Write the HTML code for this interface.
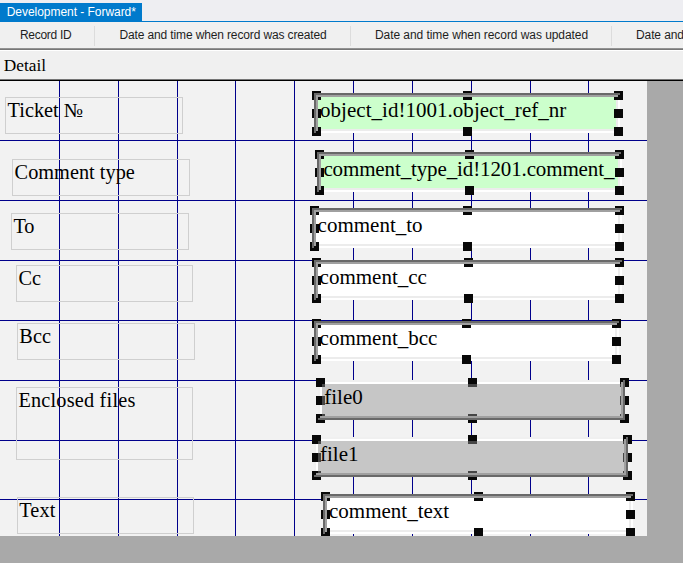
<!DOCTYPE html>
<html><head><meta charset="utf-8"><title>Development - Forward*</title>
<style>
html,body{margin:0;padding:0;}
body{width:683px;height:563px;overflow:hidden;position:relative;background:#a9a9a9;font-family:"Liberation Sans",sans-serif;}
.abs,.abs *{position:absolute;}
#top{left:0;top:0;width:683px;height:22px;background:#eeeef2;}
#tab{left:0;top:3px;width:142px;height:18px;background:#007acc;color:#fff;font-size:12px;line-height:18px;letter-spacing:-0.04px;white-space:nowrap;}
#tab span{left:6.7px;top:0px;}
#tabline{left:0;top:20.9px;width:683px;height:1.15px;background:#007acc;}
#hdr{left:0;top:22px;width:683px;height:26.5px;background:#f0f0f0;font-size:12px;color:#1e1e1e;white-space:nowrap;}
#hdr span{top:0;line-height:26px;letter-spacing:-0.1px;}
#hdr i{top:4px;width:1px;height:20px;background:#dcdcdc;}
#hdrb1{left:0;top:48px;width:683px;height:2px;background:linear-gradient(#a0a0a0,#696969);}
#hdrb2{left:0;top:50px;width:683px;height:1px;background:#fff;}
#detail{left:0;top:51px;width:683px;height:29px;background:#f0f0f0;font-family:"Liberation Serif",serif;font-size:17.3px;color:#000;}
#detail span{left:3.8px;top:5.3px;line-height:20px;}
#blk{left:0;top:78.6px;width:683px;height:2.4px;background:linear-gradient(#c8c8c8 0,#000 1.2px,#000 100%);}
#canvas{left:0;top:81px;width:647.4px;height:454.7px;background:#f2f2f2;overflow:hidden;font-family:"Liberation Serif",serif;font-size:21px;color:#000;white-space:nowrap;}
.v{top:0;width:1.2px;height:460px;background:#00008b;}
.h{left:0;height:1.2px;width:650px;background:#00008b;}
.lbl{border:1px solid #cfcfcf;box-sizing:border-box;}
.lbl span{left:1.8px;top:0.3px;line-height:24px;font-size:20.3px;}
.fill{}
.hd{background:#080808;width:9px;height:9px;}
.bd{}
.txt{overflow:hidden;}
.txt span{line-height:24px;}
</style></head><body>
<div class="abs">
<div id="top"></div>
<div id="tab"><span>Development - Forward*</span></div>
<div id="tabline"></div>
<div id="hdr">
<span style="left:20px;letter-spacing:-0.3px">Record ID</span><i style="left:94px"></i>
<span style="left:119.5px;letter-spacing:-0.135px">Date and time when record was created</span><i style="left:350px"></i>
<span style="left:375px;letter-spacing:-0.065px">Date and time when record was updated</span><i style="left:611px"></i>
<span style="left:636px">Date and time when record was closed</span>
</div>
<div id="hdrb1"></div><div id="hdrb2"></div>
<div id="detail"><span>Detail</span></div>
<div id="canvas">

<div class="v" style="left:58.7px"></div>
<div class="v" style="left:117.7px"></div>
<div class="v" style="left:176.6px"></div>
<div class="v" style="left:235.0px"></div>
<div class="v" style="left:294.0px"></div>
<div class="v" style="left:352.9px"></div>
<div class="v" style="left:411.8px"></div>
<div class="v" style="left:470.8px"></div>
<div class="v" style="left:529.9px"></div>
<div class="v" style="left:588.0px"></div>
<div class="h" style="top:58.8px"></div>
<div class="h" style="top:118.8px"></div>
<div class="h" style="top:178.5px"></div>
<div class="h" style="top:238.6px"></div>
<div class="h" style="top:298.6px"></div>
<div class="h" style="top:358.7px"></div>
<div class="h" style="top:417.7px"></div>
<div class="lbl" style="left:4.8px;top:16.0px;width:178.7px;height:36.7px"><span style="letter-spacing:0.00px">Ticket №</span></div>
<div class="lbl" style="left:11.8px;top:77.8px;width:178.4px;height:36.9px"><span style="letter-spacing:0.02px">Comment type</span></div>
<div class="lbl" style="left:10.6px;top:131.7px;width:178.2px;height:37.0px"><span style="letter-spacing:0.00px">To</span></div>
<div class="lbl" style="left:15.6px;top:183.8px;width:177.6px;height:37.3px"><span style="letter-spacing:0.15px">Cc</span></div>
<div class="lbl" style="left:16.5px;top:241.5px;width:178.7px;height:37.6px"><span style="letter-spacing:0.10px">Bcc</span></div>
<div class="lbl" style="left:15.6px;top:305.8px;width:177.6px;height:73.3px"><span style="letter-spacing:0.20px">Enclosed files</span></div>
<div class="lbl" style="left:16.5px;top:415.6px;width:177.8px;height:37.6px"><span style="letter-spacing:0.10px">Text</span></div>
<div style="left:314.0px;top:12.0px;width:306.3px;height:40.0px;background:#ccffcc"></div>
<div style="left:314.0px;top:50.0px;width:306.3px;height:2.0px;background:#ffffff"></div>
<div style="left:618.3px;top:12.0px;width:2.0px;height:40.0px;background:#ffffff"></div>
<div style="left:316.0px;top:48.0px;width:302.3px;height:2.0px;background:#ececec"></div>
<div style="left:616.3px;top:14.0px;width:2.0px;height:36.0px;background:#ececec"></div>
<div class="hd" style="left:312.0px;top:10.0px"></div>
<div class="hd" style="left:312.0px;top:28.0px"></div>
<div class="hd" style="left:312.0px;top:46.0px"></div>
<div class="hd" style="left:463.0px;top:10.0px"></div>
<div class="hd" style="left:463.0px;top:46.0px"></div>
<div class="hd" style="left:614.0px;top:10.0px"></div>
<div class="hd" style="left:614.0px;top:28.0px"></div>
<div class="hd" style="left:614.0px;top:46.0px"></div>
<div style="left:314.0px;top:12.0px;width:306.3px;height:2.0px;background:#696969"></div>
<div style="left:314.0px;top:12.0px;width:2.0px;height:40.0px;background:#696969"></div>
<div style="left:316.0px;top:14.0px;width:302.3px;height:2.0px;background:#a0a0a0"></div>
<div style="left:316.0px;top:14.0px;width:2.0px;height:36.0px;background:#a0a0a0"></div>
<div class="txt" style="left:318.0px;top:16.0px;width:298.3px;height:32.0px"><span style="left:2.0px;top:1px;letter-spacing:0.030px">object_id!1001.object_ref_nr</span></div>
<div style="left:316.7px;top:70.7px;width:304.8px;height:40.3px;background:#ccffcc"></div>
<div style="left:316.7px;top:109.0px;width:304.8px;height:2.0px;background:#ffffff"></div>
<div style="left:619.5px;top:70.7px;width:2.0px;height:40.3px;background:#ffffff"></div>
<div style="left:318.7px;top:107.0px;width:300.8px;height:2.0px;background:#ececec"></div>
<div style="left:617.5px;top:72.7px;width:2.0px;height:36.3px;background:#ececec"></div>
<div class="hd" style="left:315.2px;top:68.7px"></div>
<div class="hd" style="left:315.2px;top:86.8px"></div>
<div class="hd" style="left:315.2px;top:105.0px"></div>
<div class="hd" style="left:465.1px;top:68.7px"></div>
<div class="hd" style="left:465.1px;top:105.0px"></div>
<div class="hd" style="left:615.0px;top:68.7px"></div>
<div class="hd" style="left:615.0px;top:86.8px"></div>
<div class="hd" style="left:615.0px;top:105.0px"></div>
<div style="left:316.7px;top:70.7px;width:304.8px;height:2.0px;background:#696969"></div>
<div style="left:316.7px;top:70.7px;width:2.0px;height:40.3px;background:#696969"></div>
<div style="left:318.7px;top:72.7px;width:300.8px;height:2.0px;background:#a0a0a0"></div>
<div style="left:318.7px;top:72.7px;width:2.0px;height:36.3px;background:#a0a0a0"></div>
<div class="txt" style="left:320.7px;top:74.7px;width:296.8px;height:32.3px"><span style="left:2.7px;top:1px;letter-spacing:-0.125px">comment_type_id!1201.comment_</span></div>
<div style="left:312.0px;top:127.0px;width:309.5px;height:40.0px;background:#ffffff"></div>
<div style="left:312.0px;top:165.0px;width:309.5px;height:2.0px;background:#ffffff"></div>
<div style="left:619.5px;top:127.0px;width:2.0px;height:40.0px;background:#ffffff"></div>
<div style="left:314.0px;top:163.0px;width:305.5px;height:2.0px;background:#ececec"></div>
<div style="left:617.5px;top:129.0px;width:2.0px;height:36.0px;background:#ececec"></div>
<div class="hd" style="left:310.0px;top:125.0px"></div>
<div class="hd" style="left:310.0px;top:143.0px"></div>
<div class="hd" style="left:310.0px;top:161.0px"></div>
<div class="hd" style="left:462.5px;top:125.0px"></div>
<div class="hd" style="left:462.5px;top:161.0px"></div>
<div class="hd" style="left:615.0px;top:125.0px"></div>
<div class="hd" style="left:615.0px;top:143.0px"></div>
<div class="hd" style="left:615.0px;top:161.0px"></div>
<div style="left:312.0px;top:127.0px;width:309.5px;height:2.0px;background:#696969"></div>
<div style="left:312.0px;top:127.0px;width:2.0px;height:40.0px;background:#696969"></div>
<div style="left:314.0px;top:129.0px;width:305.5px;height:2.0px;background:#a0a0a0"></div>
<div style="left:314.0px;top:129.0px;width:2.0px;height:36.0px;background:#a0a0a0"></div>
<div class="txt" style="left:316.0px;top:131.0px;width:301.5px;height:32.0px"><span style="left:1.6px;top:1px;letter-spacing:0.000px">comment_to</span></div>
<div style="left:314.0px;top:178.5px;width:307.5px;height:40.0px;background:#ffffff"></div>
<div style="left:314.0px;top:216.5px;width:307.5px;height:2.0px;background:#ffffff"></div>
<div style="left:619.5px;top:178.5px;width:2.0px;height:40.0px;background:#ffffff"></div>
<div style="left:316.0px;top:214.5px;width:303.5px;height:2.0px;background:#ececec"></div>
<div style="left:617.5px;top:180.5px;width:2.0px;height:36.0px;background:#ececec"></div>
<div class="hd" style="left:312.0px;top:176.5px"></div>
<div class="hd" style="left:312.0px;top:194.5px"></div>
<div class="hd" style="left:312.0px;top:212.5px"></div>
<div class="hd" style="left:463.5px;top:176.5px"></div>
<div class="hd" style="left:463.5px;top:212.5px"></div>
<div class="hd" style="left:615.0px;top:176.5px"></div>
<div class="hd" style="left:615.0px;top:194.5px"></div>
<div class="hd" style="left:615.0px;top:212.5px"></div>
<div style="left:314.0px;top:178.5px;width:307.5px;height:2.0px;background:#696969"></div>
<div style="left:314.0px;top:178.5px;width:2.0px;height:40.0px;background:#696969"></div>
<div style="left:316.0px;top:180.5px;width:303.5px;height:2.0px;background:#a0a0a0"></div>
<div style="left:316.0px;top:180.5px;width:2.0px;height:36.0px;background:#a0a0a0"></div>
<div class="txt" style="left:318.0px;top:182.5px;width:299.5px;height:32.0px"><span style="left:1.6px;top:1px;letter-spacing:0.000px">comment_cc</span></div>
<div style="left:314.0px;top:240.0px;width:304.5px;height:40.0px;background:#ffffff"></div>
<div style="left:314.0px;top:278.0px;width:304.5px;height:2.0px;background:#ffffff"></div>
<div style="left:616.5px;top:240.0px;width:2.0px;height:40.0px;background:#ffffff"></div>
<div style="left:316.0px;top:276.0px;width:300.5px;height:2.0px;background:#ececec"></div>
<div style="left:614.5px;top:242.0px;width:2.0px;height:36.0px;background:#ececec"></div>
<div class="hd" style="left:312.0px;top:238.0px"></div>
<div class="hd" style="left:312.0px;top:256.0px"></div>
<div class="hd" style="left:312.0px;top:274.0px"></div>
<div class="hd" style="left:462.0px;top:238.0px"></div>
<div class="hd" style="left:462.0px;top:274.0px"></div>
<div class="hd" style="left:612.0px;top:238.0px"></div>
<div class="hd" style="left:612.0px;top:256.0px"></div>
<div class="hd" style="left:612.0px;top:274.0px"></div>
<div style="left:314.0px;top:240.0px;width:304.5px;height:2.0px;background:#696969"></div>
<div style="left:314.0px;top:240.0px;width:2.0px;height:40.0px;background:#696969"></div>
<div style="left:316.0px;top:242.0px;width:300.5px;height:2.0px;background:#a0a0a0"></div>
<div style="left:316.0px;top:242.0px;width:2.0px;height:36.0px;background:#a0a0a0"></div>
<div class="txt" style="left:318.0px;top:244.0px;width:296.5px;height:32.0px"><span style="left:1.6px;top:1px;letter-spacing:0.000px">comment_bcc</span></div>
<div style="left:318.3px;top:299.0px;width:306.7px;height:40.0px;background:#c6c6c6"></div>
<div style="left:318.3px;top:299.0px;width:306.7px;height:2.0px;background:#f0f0f0"></div>
<div style="left:318.3px;top:299.0px;width:2.0px;height:40.0px;background:#f0f0f0"></div>
<div style="left:320.3px;top:301.0px;width:302.7px;height:2.0px;background:#ffffff"></div>
<div style="left:320.3px;top:301.0px;width:2.0px;height:36.0px;background:#ffffff"></div>
<div class="hd" style="left:316.2px;top:297.0px"></div>
<div class="hd" style="left:316.2px;top:315.0px"></div>
<div class="hd" style="left:316.2px;top:333.0px"></div>
<div class="hd" style="left:468.1px;top:297.0px"></div>
<div class="hd" style="left:468.1px;top:333.0px"></div>
<div class="hd" style="left:620.0px;top:297.0px"></div>
<div class="hd" style="left:620.0px;top:315.0px"></div>
<div class="hd" style="left:620.0px;top:333.0px"></div>
<div style="left:322.3px;top:303.0px;width:298.7px;height:32.0px;background:rgba(198,198,198,0.33)"></div>
<div style="left:318.3px;top:337.0px;width:306.7px;height:2.0px;background:#696969"></div>
<div style="left:623.0px;top:299.0px;width:2.0px;height:40.0px;background:#696969"></div>
<div style="left:320.3px;top:335.0px;width:302.7px;height:2.0px;background:#a0a0a0"></div>
<div style="left:621.0px;top:301.0px;width:2.0px;height:36.0px;background:#a0a0a0"></div>
<div class="txt" style="left:322.3px;top:303.0px;width:298.7px;height:32.0px"><span style="left:2.0px;top:1px;letter-spacing:0.000px">file0</span></div>
<div style="left:314.0px;top:356.0px;width:314.0px;height:39.6px;background:#c6c6c6"></div>
<div style="left:314.0px;top:356.0px;width:314.0px;height:2.0px;background:#f0f0f0"></div>
<div style="left:314.0px;top:356.0px;width:2.0px;height:39.6px;background:#f0f0f0"></div>
<div style="left:316.0px;top:358.0px;width:310.0px;height:2.0px;background:#ffffff"></div>
<div style="left:316.0px;top:358.0px;width:2.0px;height:35.6px;background:#ffffff"></div>
<div class="hd" style="left:312.0px;top:354.0px"></div>
<div class="hd" style="left:312.0px;top:371.8px"></div>
<div class="hd" style="left:312.0px;top:389.6px"></div>
<div class="hd" style="left:467.5px;top:354.0px"></div>
<div class="hd" style="left:467.5px;top:389.6px"></div>
<div class="hd" style="left:623.0px;top:354.0px"></div>
<div class="hd" style="left:623.0px;top:371.8px"></div>
<div class="hd" style="left:623.0px;top:389.6px"></div>
<div style="left:318.0px;top:360.0px;width:306.0px;height:31.6px;background:rgba(198,198,198,0.33)"></div>
<div style="left:314.0px;top:393.6px;width:314.0px;height:2.0px;background:#696969"></div>
<div style="left:626.0px;top:356.0px;width:2.0px;height:39.6px;background:#696969"></div>
<div style="left:316.0px;top:391.6px;width:310.0px;height:2.0px;background:#a0a0a0"></div>
<div style="left:624.0px;top:358.0px;width:2.0px;height:35.6px;background:#a0a0a0"></div>
<div class="txt" style="left:318.0px;top:360.0px;width:306.0px;height:31.6px"><span style="left:2.0px;top:1px;letter-spacing:0.000px">file1</span></div>
<div style="left:323.0px;top:413.0px;width:309.5px;height:40.3px;background:#ffffff"></div>
<div style="left:323.0px;top:451.3px;width:309.5px;height:2.0px;background:#ffffff"></div>
<div style="left:630.5px;top:413.0px;width:2.0px;height:40.3px;background:#ffffff"></div>
<div style="left:325.0px;top:449.3px;width:305.5px;height:2.0px;background:#ececec"></div>
<div style="left:628.5px;top:415.0px;width:2.0px;height:36.3px;background:#ececec"></div>
<div class="hd" style="left:321.0px;top:411.0px"></div>
<div class="hd" style="left:321.0px;top:429.1px"></div>
<div class="hd" style="left:321.0px;top:447.3px"></div>
<div class="hd" style="left:473.6px;top:411.0px"></div>
<div class="hd" style="left:473.6px;top:447.3px"></div>
<div class="hd" style="left:626.2px;top:411.0px"></div>
<div class="hd" style="left:626.2px;top:429.1px"></div>
<div class="hd" style="left:626.2px;top:447.3px"></div>
<div style="left:323.0px;top:413.0px;width:309.5px;height:2.0px;background:#696969"></div>
<div style="left:323.0px;top:413.0px;width:2.0px;height:40.3px;background:#696969"></div>
<div style="left:325.0px;top:415.0px;width:305.5px;height:2.0px;background:#a0a0a0"></div>
<div style="left:325.0px;top:415.0px;width:2.0px;height:36.3px;background:#a0a0a0"></div>
<div class="txt" style="left:327.0px;top:417.0px;width:301.5px;height:32.3px"><span style="left:2.0px;top:1px;letter-spacing:0.000px">comment_text</span></div>
</div>
<div id="blk"></div>
</div></body></html>
